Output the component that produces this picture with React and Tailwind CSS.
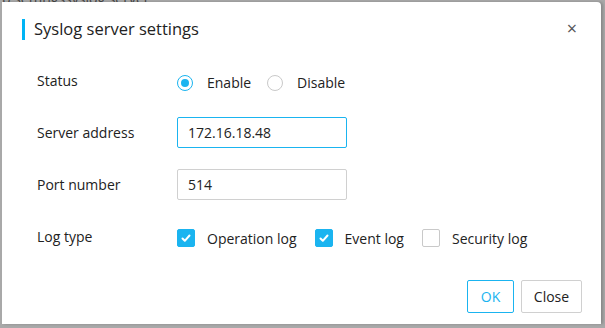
import { useState } from 'react';

function Radio({ checked, label, onClick }) {
	return (
		<button type="button" onClick={onClick} className="flex items-center">
			<span
				className={`flex h-4 w-4 items-center justify-center rounded-full border bg-white ${
					checked ? 'border-[#1ab4f0]' : 'border-[#c9c9c9]'
				}`}
			>
				{checked && <span className="h-2 w-2 rounded-full bg-[#1ab4f0]" />}
			</span>
			<span className="ml-[14px] text-[14px] text-[#222]">{label}</span>
		</button>
	);
}

function Check({ checked, label, onClick }) {
	return (
		<button type="button" onClick={onClick} className="flex items-center">
			<span
				className={`flex h-[18px] w-[18px] items-center justify-center rounded-[2px] border ${
					checked ? 'border-[#1ab4f0] bg-[#1ab4f0]' : 'border-[#c9c9c9] bg-white'
				}`}
			>
				{checked && (
					<svg viewBox="0 0 12 12" className="h-3 w-3" fill="none" stroke="white" strokeWidth="2" strokeLinecap="round" strokeLinejoin="round">
						<path d="M2.5 6.5l2.3 2.3L9.5 3.5" />
					</svg>
				)}
			</span>
			<span className="ml-[12px] text-[14px] text-[#222]">{label}</span>
		</button>
	);
}

export default function App() {
	const [enabled, setEnabled] = useState(true);
	const [address, setAddress] = useState('172.16.18.48');
	const [port, setPort] = useState('514');
	const [logs, setLogs] = useState({ op: true, ev: true, sec: false });

	const toggle = (k) => setLogs((l) => ({ ...l, [k]: !l[k] }));

	return (
		<div className="relative h-[328px] w-[605px] overflow-hidden bg-[#a9a9a9] pl-[2px] pt-[2px] font-['Open_Sans','Noto_Sans',sans-serif]">
			<div className="absolute left-[2px] top-[-12px] text-[14px] text-[#444]">p settingssyslog server</div>
			<div className="relative flex h-[322px] w-[599px] flex-col rounded-tr-[4px] bg-white shadow-[2px_0_3px_rgba(0,0,0,0.2)]">
				<div className="flex items-center justify-between pl-[20px] pr-[24px] pt-[15px]">
					<div className="flex items-center">
						<span className="h-[21px] w-[3px] bg-[#00b4f5]" />
						<span className="ml-[9px] text-[16.5px] text-[#222]">Syslog server settings</span>
					</div>
					<button type="button" className="-mt-[3px] text-[18px] leading-none text-[#555]">
						×
					</button>
				</div>

				<div className="mt-[24px] flex flex-col pl-[35px]">
					<div className="flex h-[34px] items-center">
						<span className="w-[140px] text-[14px] text-[#222] -mt-[4px]">Status</span>
						<div className="flex items-center gap-[16px]">
							<Radio checked={enabled} label="Enable" onClick={() => setEnabled(true)} />
							<Radio checked={!enabled} label="Disable" onClick={() => setEnabled(false)} />
						</div>
					</div>
					<div className="mt-[17px] flex items-center">
						<span className="w-[140px] text-[14px] text-[#222]">Server address</span>
						<input
							value={address}
							onChange={(e) => setAddress(e.target.value)}
							className="h-[31px] w-[170px] rounded-[2px] border border-[#1ab4f0] px-[10px] text-[14px] text-[#222] outline-none"
						/>
					</div>
					<div className="mt-[21px] flex items-center">
						<span className="w-[140px] text-[14px] text-[#222]">Port number</span>
						<input
							value={port}
							onChange={(e) => setPort(e.target.value)}
							className="h-[31px] w-[170px] rounded-[2px] border border-[#d0d0d0] px-[10px] text-[14px] text-[#222] outline-none"
						/>
					</div>
					<div className="mt-[28px] flex items-center">
						<span className="w-[140px] text-[14px] text-[#222] -mt-[4px]">Log type</span>
						<div className="flex items-center gap-[18px]">
							<Check checked={logs.op} label="Operation log" onClick={() => toggle('op')} />
							<Check checked={logs.ev} label="Event log" onClick={() => toggle('ev')} />
							<Check checked={logs.sec} label="Security log" onClick={() => toggle('sec')} />
						</div>
					</div>
				</div>

				<div className="mt-auto flex justify-end gap-[7px] pb-[11px] pr-[19px]">
					<button type="button" className="h-[33px] w-[47px] rounded-[2px] border border-[#1ab4f0] text-[14px] text-[#1ab4f0]">
						OK
					</button>
					<button type="button" className="h-[33px] w-[61px] rounded-[2px] border border-[#d0d0d0] text-[14px] text-[#222]">
						Close
					</button>
				</div>
			</div>
		</div>
	);
}
